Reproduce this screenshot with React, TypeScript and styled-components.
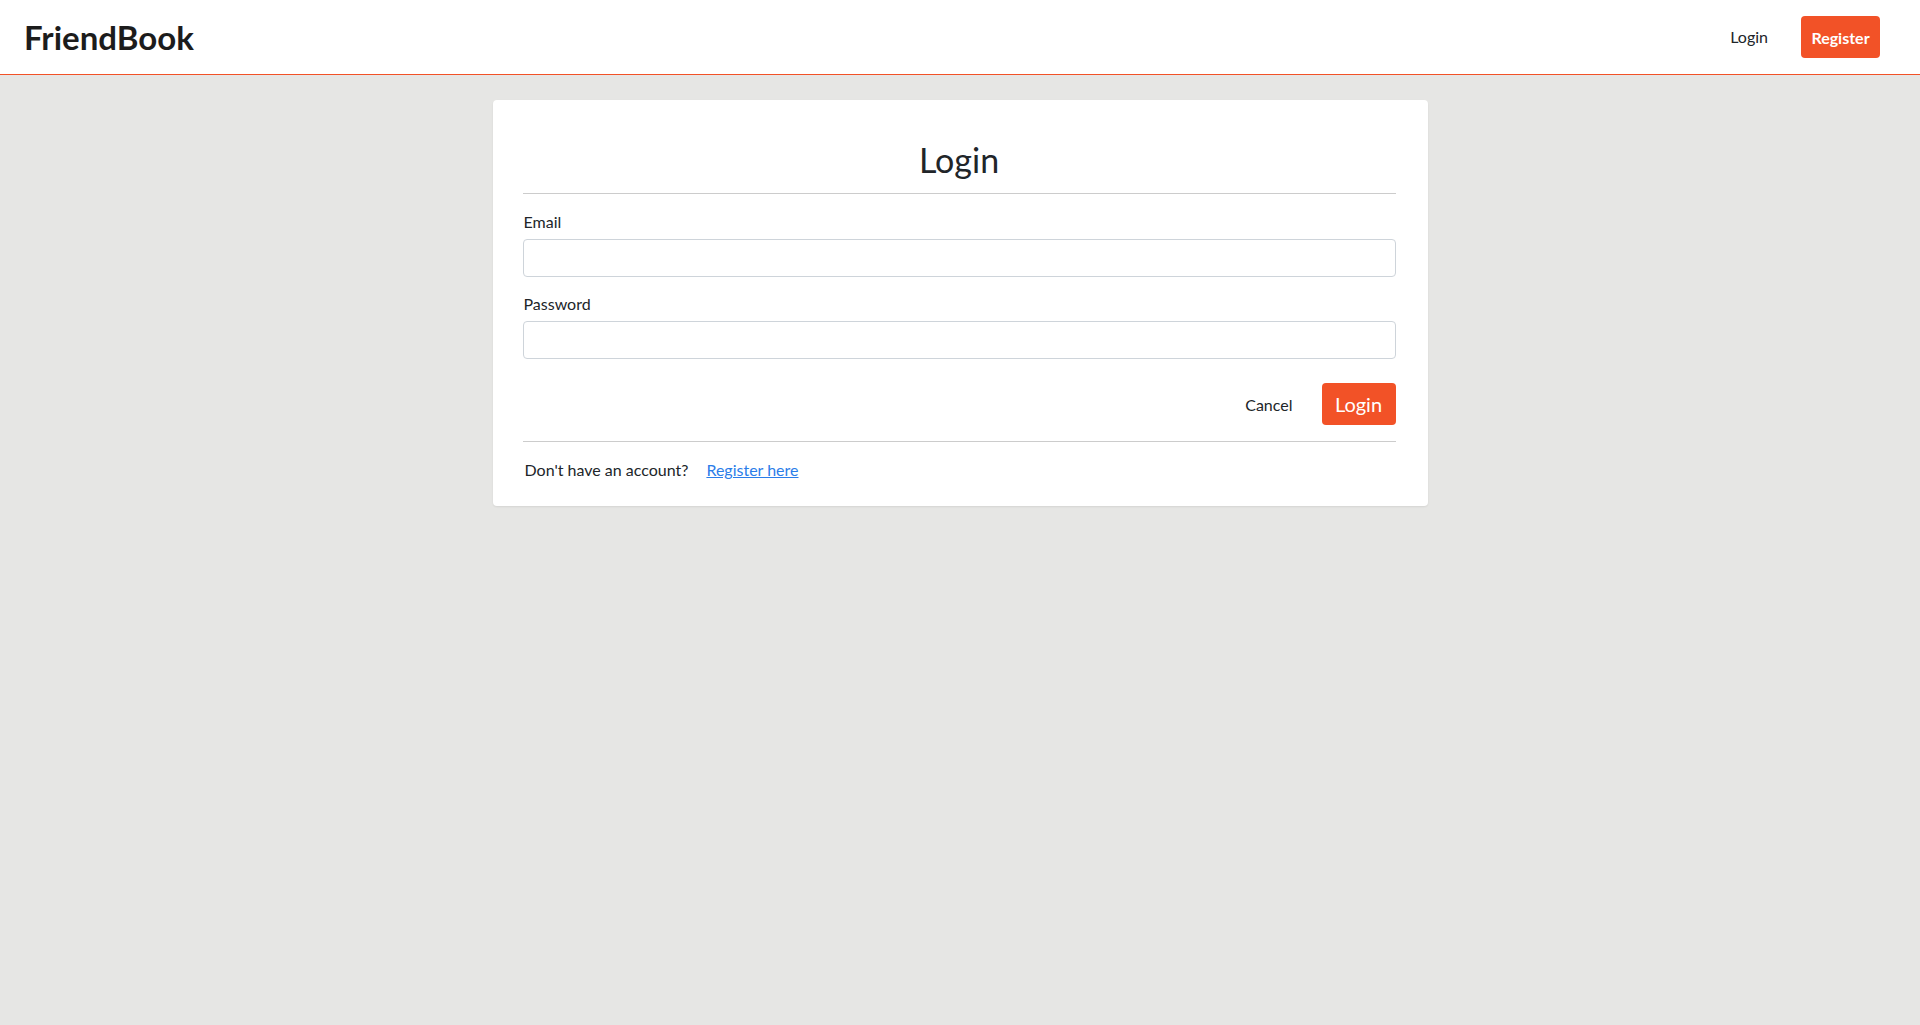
import styled, { createGlobalStyle } from 'styled-components'

const GlobalStyle = createGlobalStyle`
  * {
    box-sizing: border-box;
  }
  html,
  body {
    margin: 0;
    padding: 0;
    background: #e6e6e4;
    font-family: Lato, 'Noto Sans', sans-serif;
    color: #212529;
  }
`

const orange = '#f25227'

const Page = styled.div`
  min-height: 1025px;
  background: #e6e6e4;
`

const Navbar = styled.header`
  display: flex;
  align-items: center;
  justify-content: space-between;
  height: 75px;
  padding: 0 40px 0 24px;
  background: #fff;
  border-bottom: 1px solid ${orange};
`

const Brand = styled.a`
  font-size: 33px;
  font-weight: 700;
  color: #1c1c1c;
  text-decoration: none;
`

const NavLinks = styled.nav`
  display: flex;
  align-items: center;
  gap: 33px;
`

const NavLink = styled.a`
  margin-top: -2px;
  font-size: 16px;
  color: #212529;
  text-decoration: none;
`

const NavButton = styled.a`
  display: flex;
  align-items: center;
  justify-content: center;
  width: 79px;
  height: 42px;
  border-radius: 4px;
  background: ${orange};
  color: #fff;
  font-size: 16px;
  font-weight: 700;
  text-decoration: none;
`

const Main = styled.main`
  display: flex;
  justify-content: center;
  padding-top: 25px;
`

const Card = styled.section`
  width: 935px;
  padding: 39px 32px 24px 30px;
  background: #fff;
  border-radius: 4px;
  box-shadow: 0 1px 2px rgba(0, 0, 0, 0.08);
`

const Title = styled.h1`
  margin: 0;
  padding-bottom: 13px;
  font-size: 34px;
  font-weight: 400;
  line-height: 41px;
  text-align: center;
  color: #212529;
  border-bottom: 1px solid #cccccc;
`

const Form = styled.form`
  display: flex;
  flex-direction: column;
  padding-top: 16px;
`

const Field = styled.div<{ $gap?: number }>`
  display: flex;
  flex-direction: column;
  gap: 5px;
  margin-top: ${({ $gap }) => $gap ?? 0}px;
`

const Label = styled.label`
  padding-left: 1px;
  font-size: 16px;
  line-height: 24px;
  color: #212529;
`

const Input = styled.input`
  height: 38px;
  width: 100%;
  padding: 6px 12px;
  font: inherit;
  font-size: 16px;
  border: 1px solid #ced4da;
  border-radius: 4px;
  background: #fff;
  outline: none;
`

const Actions = styled.div`
  display: flex;
  justify-content: flex-end;
  align-items: center;
  gap: 17px;
  margin-top: 24px;
  padding-bottom: 16px;
  border-bottom: 1px solid #cccccc;
`

const TextButton = styled.button`
  padding: 0 12px;
  border: none;
  background: none;
  font: inherit;
  font-size: 16px;
  color: #212529;
  cursor: pointer;
`

const SubmitButton = styled.button`
  width: 74px;
  height: 42px;
  border: none;
  border-radius: 4px;
  background: ${orange};
  color: #fff;
  font: inherit;
  font-size: 20px;
  cursor: pointer;
`

const Footer = styled.p`
  display: flex;
  gap: 18px;
  margin: 16px 0 0;
  padding-left: 2px;
  font-size: 16px;
  line-height: 24px;
  color: #212529;
`

const FooterLink = styled.a`
  color: #2b7de9;
  text-decoration: underline;
`

export default function App() {
  return (
    <Page>
      <GlobalStyle />
      <Navbar>
        <Brand href="#">FriendBook</Brand>
        <NavLinks>
          <NavLink href="#">Login</NavLink>
          <NavButton href="#">Register</NavButton>
        </NavLinks>
      </Navbar>
      <Main>
        <Card>
          <Title>Login</Title>
          <Form onSubmit={(e) => e.preventDefault()}>
            <Field>
              <Label htmlFor="email">Email</Label>
              <Input id="email" type="email" />
            </Field>
            <Field $gap={15}>
              <Label htmlFor="password">Password</Label>
              <Input id="password" type="password" />
            </Field>
            <Actions>
              <TextButton type="button">Cancel</TextButton>
              <SubmitButton type="submit">Login</SubmitButton>
            </Actions>
          </Form>
          <Footer>
            <span>Don't have an account?</span>
            <FooterLink href="#">Register here</FooterLink>
          </Footer>
        </Card>
      </Main>
    </Page>
  )
}
